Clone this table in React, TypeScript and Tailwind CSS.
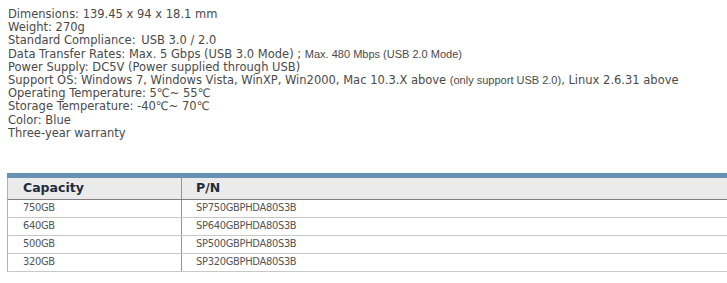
import React from "react";

const lines: React.ReactNode[] = [
  "Dimensions: 139.45 x 94 x 18.1 mm",
  "Weight: 270g",
  "Standard Compliance:\u2002USB 3.0 / 2.0",
  <>
    Data Transfer Rates: Max. 5 Gbps (USB 3.0 Mode) ;{" "}
    <span className="font-['Liberation_Sans',Arial,sans-serif] text-[11px]">Max. 480 Mbps (USB 2.0 Mode)</span>
  </>,
  "Power Supply: DC5V (Power supplied through USB)",
  <>
    Support OS: Windows 7, Windows Vista, WinXP, Win2000, Mac 10.3.X above{" "}
    <span className="font-['Liberation_Sans',Arial,sans-serif] text-[11px]">(only support USB 2.0)</span>, Linux 2.6.31 above
  </>,
  "Operating Temperature: 5℃~ 55℃",
  "Storage Temperature: -40℃~ 70℃",
  "Color: Blue",
  "Three-year warranty",
];

const rows = [
  ["750GB", "SP750GBPHDA80S3B"],
  ["640GB", "SP640GBPHDA80S3B"],
  ["500GB", "SP500GBPHDA80S3B"],
  ["320GB", "SP320GBPHDA80S3B"],
];

export default function App() {
  return (
    <div className="w-[727px] h-[283px] bg-white overflow-hidden font-['DejaVu_Sans',Verdana,sans-serif] text-[#4a4a4a]">
      <div className="pl-[8px] pt-[8px] text-[11.5px] leading-[13.2px] whitespace-nowrap">
        {lines.map((l, i) => (
          <div key={i}>{l}</div>
        ))}
      </div>
      <div className="ml-[7px] mt-[33px] w-[720px] border-t-[5px] border-[#6892b4]">
        <div className="flex h-[22px] bg-[#ebebeb] border-b border-[#808080] border-l border-l-[#9fb6c8]">
          <div className="w-[174px] border-r border-[#7d9ab3] pl-[15px] flex items-center font-bold text-[12.5px] text-[#1f2b3a]">
            Capacity
          </div>
          <div className="flex-1 pl-[14px] flex items-center font-bold text-[12.5px] text-[#1f2b3a]">P/N</div>
        </div>
        {rows.map((r) => (
          <div
            key={r[0]}
            className="flex h-[18px] border-b border-[#c8c8c8] border-l border-l-[#9fb6c8] font-['DejaVu_Sans_Condensed','DejaVu_Sans',sans-serif] text-[11px] tracking-[-0.3px] text-[#555]"
          >
            <div className="w-[174px] border-r border-[#7d9ab3] pl-[15px] flex items-center">{r[0]}</div>
            <div className="flex-1 pl-[14px] flex items-center">{r[1]}</div>
          </div>
        ))}
      </div>
    </div>
  );
}
